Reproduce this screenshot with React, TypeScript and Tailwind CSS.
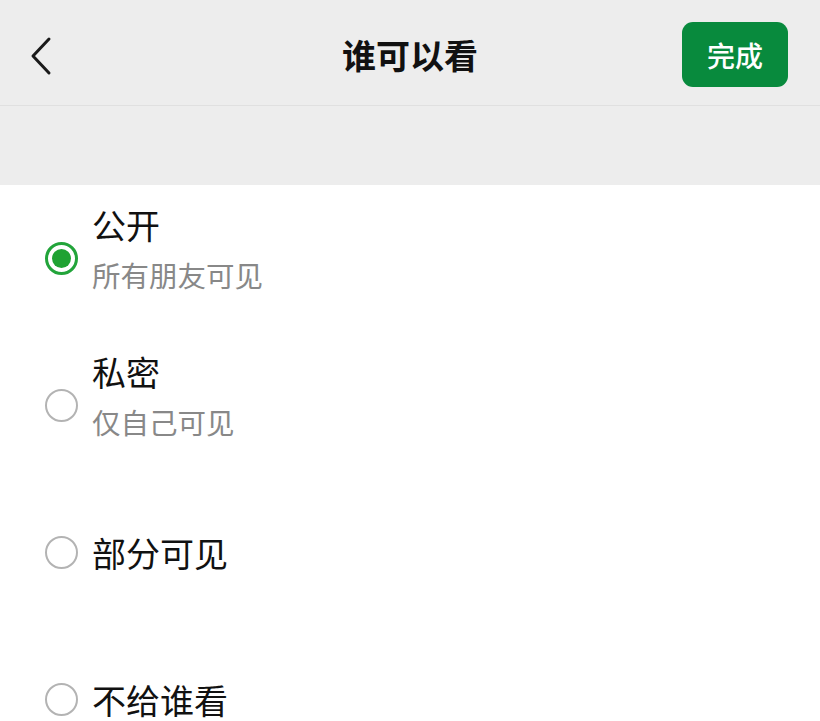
import React from "react";

const font = { fontFamily: '"Noto Sans CJK SC", "Noto Sans", sans-serif' };

function Radio({ checked }: { checked: boolean }) {
  if (checked) {
    return (
      <div className="w-[33px] h-[33px] rounded-full border-[3px] border-[#22a43a] flex items-center justify-center shrink-0">
        <div className="w-[19px] h-[19px] rounded-full bg-[#1fa233]" />
      </div>
    );
  }
  return <div className="w-[33px] h-[33px] rounded-full border-[2.5px] border-[#b3b3b3] shrink-0" />;
}

export default function App() {
  const rows = [
    { title: "公开", sub: "所有朋友可见", checked: true },
    { title: "私密", sub: "仅自己可见", checked: false },
    { title: "部分可见", sub: "", checked: false },
    { title: "不给谁看", sub: "", checked: false },
  ];
  return (
    <div className="w-[820px] h-[721px] overflow-hidden bg-white" style={font}>
      <div className="h-[106px] bg-[#ededed] border-b border-[#e0e0e0] flex items-center justify-between pl-[29px] pr-[32px] relative">
        <svg width="24" height="40" viewBox="0 0 24 40" className="mt-[6px]">
          <polyline points="20,3 4,20 20,37" fill="none" stroke="#1a1a1a" strokeWidth="3" strokeLinecap="round" strokeLinejoin="round" />
        </svg>
        <div className="absolute left-0 right-0 top-0 h-[106px] flex items-center justify-center pointer-events-none">
          <span className="text-[34px] font-bold text-[#111] leading-none mt-[3px]">谁可以看</span>
        </div>
        <button className="w-[106px] h-[65px] rounded-[11px] bg-[#088a3d] text-white text-[28px] font-medium flex items-center justify-center mt-[4px]">
          完成
        </button>
      </div>
      <div className="h-[79px] bg-[#ededed]" />
      <div className="bg-white">
        {rows.map((r) => (
          <div key={r.title} className="h-[147px] flex items-center pl-[45px]">
            <Radio checked={r.checked} />
            {r.sub ? (
              <div className="ml-[14px] flex flex-col pb-4">
                <div className="text-[34px] leading-[48px] text-[#111]">{r.title}</div>
                <div className="text-[28.5px] leading-[52px] text-[#888]">{r.sub}</div>
              </div>
            ) : (
              <div className="ml-[14px] text-[34px] leading-[48px] text-[#111]">{r.title}</div>
            )}
          </div>
        ))}
      </div>
    </div>
  );
}
